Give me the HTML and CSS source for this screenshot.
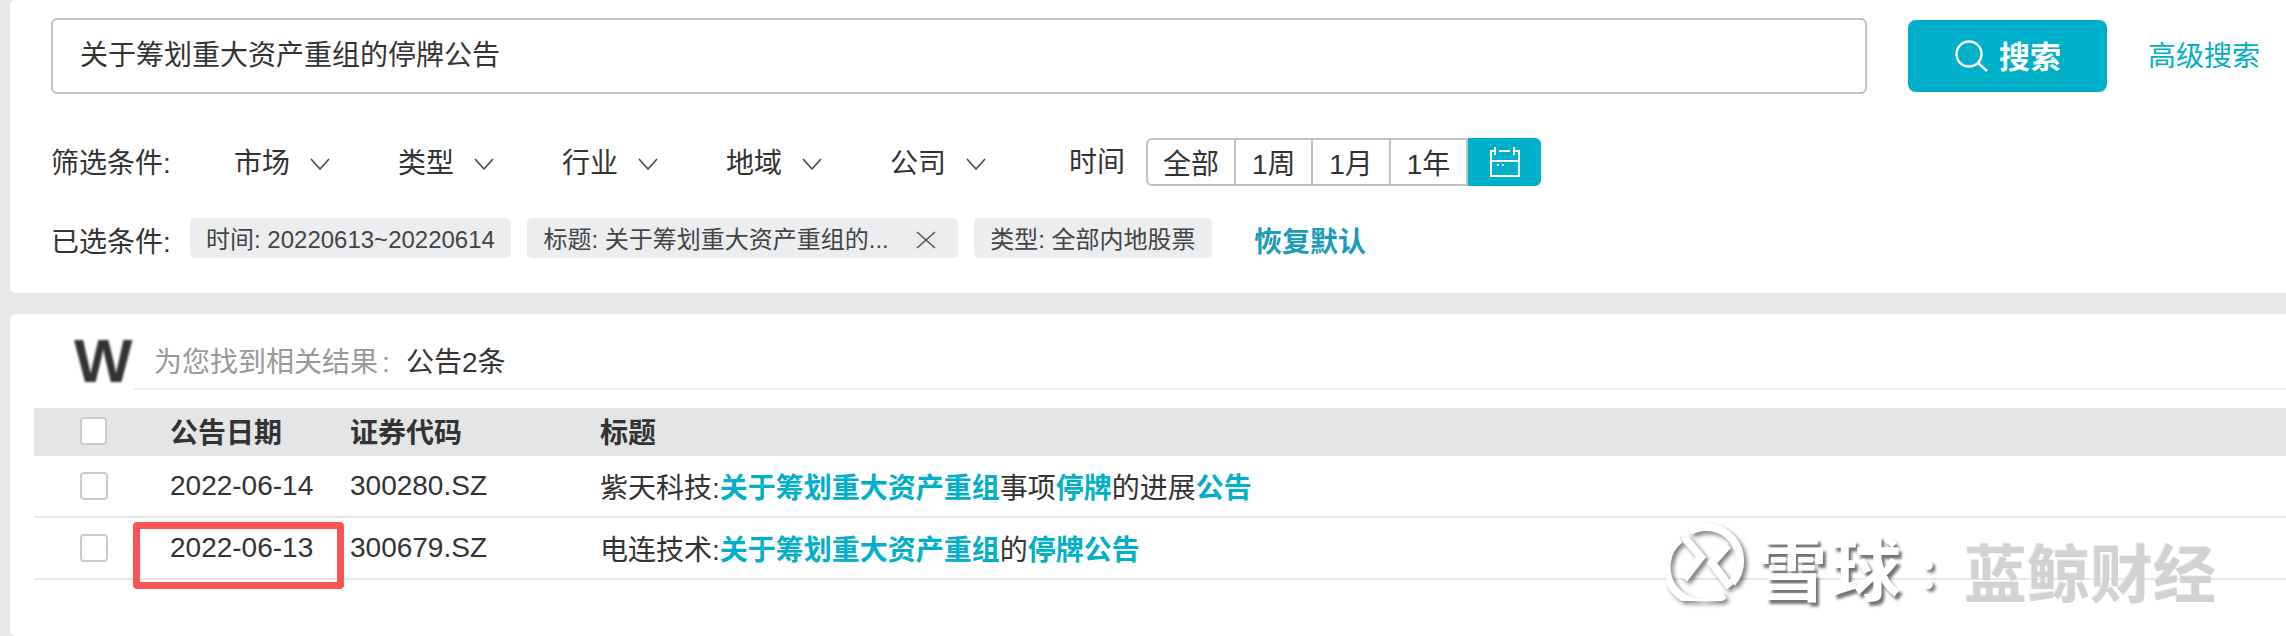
FILE: index.html
```html
<!DOCTYPE html>
<html lang="zh-CN">
<head>
<meta charset="utf-8">
<title>公告搜索</title>
<link rel="stylesheet" href="styles.css">
</head>
<body>
<section class="card filters">
  <div class="search-row">
    <div class="search-input">关于筹划重大资产重组的停牌公告</div>
    <button class="search-btn">
      <svg class="search-icon" width="34" height="32" viewBox="0 0 34 32"><circle cx="14" cy="14" r="12.5" fill="none" stroke="#fff" stroke-width="2.4"/><path d="M23 23l9 8" fill="none" stroke="#fff" stroke-width="2.4"/></svg>
      <span class="search-word">搜索</span>
    </button>
    <a class="advanced">高级搜索</a>
  </div>
  <div class="filter-row">
    <span class="label">筛选条件:</span>
    <span class="drop">市场<svg class="chev" width="20" height="12" viewBox="0 0 20 12"><path d="M1 1l9 10 9-10" fill="none" stroke="#444" stroke-width="1.5"/></svg></span>
    <span class="drop">类型<svg class="chev" width="20" height="12" viewBox="0 0 20 12"><path d="M1 1l9 10 9-10" fill="none" stroke="#444" stroke-width="1.5"/></svg></span>
    <span class="drop">行业<svg class="chev" width="20" height="12" viewBox="0 0 20 12"><path d="M1 1l9 10 9-10" fill="none" stroke="#444" stroke-width="1.5"/></svg></span>
    <span class="drop">地域<svg class="chev" width="20" height="12" viewBox="0 0 20 12"><path d="M1 1l9 10 9-10" fill="none" stroke="#444" stroke-width="1.5"/></svg></span>
    <span class="drop drop-last">公司<svg class="chev" width="20" height="12" viewBox="0 0 20 12"><path d="M1 1l9 10 9-10" fill="none" stroke="#444" stroke-width="1.5"/></svg></span>
    <span class="time-label">时间</span>
    <div class="range">
      <span class="cell cell-wide">全部</span>
      <span class="cell">1周</span>
      <span class="cell">1月</span>
      <span class="cell">1年</span>
      <span class="cell-cal">
        <svg width="32" height="30" viewBox="0 0 32 30" fill="none" stroke="#fff" stroke-width="2"><path d="M6 4H2v25h28V4h-5M10 4h11M6 0v8M25 0v8M2 14h28"/><path d="M8 18h2M13 18h2"/></svg>
      </span>
    </div>
  </div>
  <div class="chip-row">
    <span class="label chip-label">已选条件:</span>
    <span class="chip">时间: 20220613~20220614</span>
    <span class="chip chip-title">标题: 关于筹划重大资产重组的...<svg class="chip-x" width="20" height="18" viewBox="0 0 20 18"><path d="M1 1l18 16M19 1L1 17" fill="none" stroke="#555" stroke-width="1.6"/></svg></span>
    <span class="chip">类型: 全部内地股票</span>
    <a class="reset">恢复默认</a>
  </div>
</section>

<section class="card results">
  <div class="summary">
    <div class="w-mark"><span>W</span></div>
    <div class="summary-text"><span class="muted">为您找到相关结果<span class="colon">:</span></span><span class="count">公告2条</span></div>
  </div>
  <div class="row head">
    <span class="box box-head"></span>
    <span>公告日期</span>
    <span>证券代码</span>
    <span>标题</span>
  </div>
  <div class="row">
    <span class="box"></span>
    <span>2022-06-14</span>
    <span>300280.SZ</span>
    <span>紫天科技:<b>关于筹划重大资产重组</b>事项<b>停牌</b>的进展<b>公告</b></span>
  </div>
  <div class="row">
    <span class="box"></span>
    <span>2022-06-13</span>
    <span>300679.SZ</span>
    <span>电连技术:<b>关于筹划重大资产重组</b>的<b>停牌公告</b></span>
  </div>
  <div class="red-box"></div>
</section>

<div class="watermark">
  <svg class="wm-logo" width="80" height="78" viewBox="0 0 80 78" fill="none" stroke="#fff" stroke-width="8">
    <path d="M24 8A34 34 0 0 1 66 60"/>
    <path d="M14 16A34 34 0 0 0 58 72"/>
    <path d="M18 14l17 20-17 22"/>
    <path d="M62 22L46 40l18 24"/>
  </svg>
  <span class="wm-name">雪球</span>
  <span class="wm-colon">:</span>
  <span class="wm-author">蓝鲸财经</span>
</div>
</body>
</html>
```
FILE: styles.css
```css
* { box-sizing: border-box; }
html, body { margin: 0; height: 100%; }
body {
  position: relative;
  height: 100vh;
  overflow: hidden;
  display: flex;
  flex-direction: column;
  gap: 21px;
  background: #e8e8e8;
  color: #333;
  font-family: "Liberation Sans", "Noto Sans CJK SC", sans-serif;
  font-size: 28px;
}
.card {
  margin-left: 10px;
  background: #fff;
  border-radius: 6px 0 0 6px;
}
.filters { height: 293px; padding: 18px 0 0 41px; }
.results { flex: 1; padding: 24px 0 0 24px; position: relative; }

.search-row { display: flex; align-items: center; }
.search-input {
  width: 1816px;
  height: 76px;
  padding-left: 27px;
  border: 2px solid #c2c2c2;
  border-radius: 6px;
  line-height: 72px;
}
.search-btn {
  display: flex;
  align-items: center;
  gap: 10px;
  width: 199px;
  height: 72px;
  margin-left: 41px;
  padding: 0 0 0 47px;
  border: 0;
  border-radius: 8px;
  background: #00afc8;
  color: #fff;
  font: bold 31px "Liberation Sans", "Noto Sans CJK SC", sans-serif;
}
.search-word { margin-bottom: 4px; }
.advanced { margin-left: 41px; margin-bottom: 4px; color: #00afc8; }

.filter-row { display: flex; align-items: center; height: 48px; margin-top: 44px; }
.label { width: 183px; margin-bottom: 2px; }
.drop { display: flex; align-items: center; width: 164px; margin-bottom: 2px; }
.drop-last { width: 179px; }
.chev { margin-left: 20px; margin-top: 6px; }
.time-label { width: 77px; margin-top: -4px; }
.range {
  display: flex;
  height: 48px;
  border-radius: 6px;
}
.cell {
  display: flex;
  align-items: center;
  justify-content: center;
  width: 77.4px;
  border: 2px solid #c2c2c2;
  border-left: 0;
}
.cell-wide { width: 90px; border-left: 2px solid #c2c2c2; border-radius: 6px 0 0 6px; }
.cell-cal {
  display: flex;
  align-items: center;
  justify-content: center;
  width: 73px;
  background: #00afc8;
  border-radius: 0 6px 6px 0;
}

.chip-row { display: flex; align-items: center; height: 40px; margin-top: 32px; }
.chip-label { width: 139px; margin-bottom: 0; margin-top: 4px; }
.chip {
  display: flex;
  align-items: center;
  height: 40px;
  margin-right: 16px;
  padding: 0 16.5px 2px 16px;
  background: #ecedef;
  border-radius: 5px;
  font-size: 24px;
  color: #444;
  white-space: nowrap;
}
.chip-x { margin-left: 27px; margin-top: 6px; margin-right: 6px; }
.reset { margin-left: 26px; margin-top: 4px; font-weight: bold; color: #1a9cba; }

.summary { display: flex; height: 52px; padding-left: 40px; }
.w-mark { width: 60px; height: 52px; }
.w-mark span {
  display: block;
  font-size: 62px;
  font-weight: bold;
  line-height: 46px;
  color: #333;
  filter: blur(1px);
}
.summary-text {
  flex: 1;
  display: flex;
  align-items: center;
  padding: 0 0 6px 20px;
  border-bottom: 2px solid #eee;
}
.muted { color: #999; width: 252px; }
.colon { margin-left: 4px; }

.row {
  display: grid;
  grid-template-columns: 136px 180px 250px 1fr;
  align-items: center;
  height: 62px;
  border-bottom: 2px solid #e6e6e8;
  white-space: nowrap;
}
.head {
  height: 48px;
  margin-top: 18px;
  padding-bottom: 2px;
  border-bottom: 0;
  background: #e4e5e7;
  font-weight: bold;
}
.box {
  display: block;
  width: 28px;
  height: 28px;
  margin-left: 46px;
  background: #fff;
  border: 2px solid #ccc;
  border-radius: 4px;
}
.box-head { width: 27px; }
.row b { color: #00afc8; }
.red-box {
  position: absolute;
  left: 123px;
  top: 208px;
  width: 211px;
  height: 67px;
  border: 7px solid #fc5454;
  border-radius: 4px;
}

.watermark {
  position: absolute;
  left: 1666px;
  top: 523px;
  display: flex;
  align-items: center;
  font-family: "Noto Sans CJK SC", sans-serif;
  font-weight: bold;
  line-height: 1;
  color: #fff;
}
.wm-logo { filter: drop-shadow(3px 3px 2px rgba(0,0,0,.5)); }
.wm-name {
  margin-left: 11px;
  margin-top: 8px;
  font-size: 70px;
  letter-spacing: 4px;
  text-shadow: 3px 4px 3px rgba(0,0,0,.55);
}
.wm-colon {
  margin-left: 15px;
  width: 44px;
  margin-top: 8px;
  font-size: 50px;
  text-shadow: 3px 3px 3px rgba(0,0,0,.5);
}
.wm-author {
  margin-top: 14px;
  font-size: 63px;
  color: #d2d2d2;
  text-shadow: -1px -1px 0 #eee;
}
```
